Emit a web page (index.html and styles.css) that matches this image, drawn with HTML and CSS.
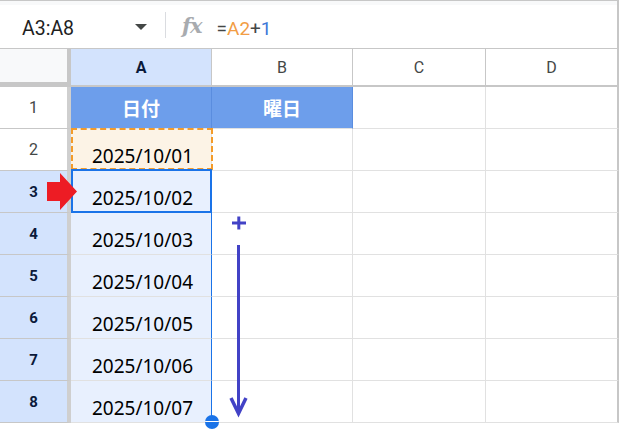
FILE: index.html
```html
<!DOCTYPE html>
<html lang="ja">
<head>
<meta charset="utf-8">
<link rel="stylesheet" href="styles.css">
</head>
<body>
<div class="app">
  <div class="fbar">
    <div class="namebox"><span class="nb-text">A3:A8</span><span class="nb-caret"></span></div>
    <div class="fdiv"></div>
    <span class="fx">fx</span>
    <span class="formula">=<span class="ref">A2</span>+<span class="num">1</span></span>
  </div>
  <div class="grid">
    <div class="corner"></div>
    <div class="ch ch-sel">A</div>
    <div class="ch">B</div>
    <div class="ch">C</div>
    <div class="ch last">D</div>

    <div class="rh">1</div>
    <div class="c hdr">日付</div>
    <div class="c hdr">曜日</div>
    <div class="c"></div>
    <div class="c last"></div>

    <div class="rh">2</div>
    <div class="c date copy">2025/10/01</div>
    <div class="c"></div>
    <div class="c"></div>
    <div class="c last"></div>

    <div class="rh rh-sel">3</div>
    <div class="c date sel active">2025/10/02</div>
    <div class="c"></div>
    <div class="c"></div>
    <div class="c last"></div>

    <div class="rh rh-sel">4</div>
    <div class="c date sel">2025/10/03</div>
    <div class="c"></div>
    <div class="c"></div>
    <div class="c last"></div>

    <div class="rh rh-sel">5</div>
    <div class="c date sel">2025/10/04</div>
    <div class="c"></div>
    <div class="c"></div>
    <div class="c last"></div>

    <div class="rh rh-sel">6</div>
    <div class="c date sel">2025/10/05</div>
    <div class="c"></div>
    <div class="c"></div>
    <div class="c last"></div>

    <div class="rh rh-sel">7</div>
    <div class="c date sel">2025/10/06</div>
    <div class="c"></div>
    <div class="c"></div>
    <div class="c last"></div>

    <div class="rh rh-sel">8</div>
    <div class="c date sel">2025/10/07</div>
    <div class="c"></div>
    <div class="c"></div>
    <div class="c last"></div>
  </div>

  <svg class="overlay" width="621" height="431" viewBox="0 0 621 431">
    <polygon fill="#ed1c24" points="47,182 60,182 60,173 77,191.5 60,210 60,201 47,201"/>
    <g stroke="#4242c6" stroke-width="3" fill="none">
      <line x1="232" y1="223" x2="246" y2="223"/>
      <line x1="238.8" y1="216.5" x2="238.8" y2="229.5"/>
      <line x1="238.5" y1="245" x2="238.5" y2="412"/>
      <polyline points="231,398 238.5,413.5 246,398" stroke-width="3.5" stroke-linejoin="miter"/>
    </g>
  </svg>
  <div class="handle"></div>
</div>
</body>
</html>
```
FILE: styles.css
```css
* { box-sizing: border-box; }
html, body { margin: 0; padding: 0; background: #fff; }
body { width: 621px; height: 431px; overflow: hidden; font-family: Roboto, "Liberation Sans", sans-serif; }

.app { position: relative; width: 621px; height: 431px; }

.fbar {
  width: 619px;
  height: 49px;
  border-top: 1px solid #c7c7c7;
  border-bottom: 1px solid #c7c7c7;
  border-right: 2px solid #c7c7c7;
  background: linear-gradient(#f8f9fa 0, #f8f9fa 4px, #fff 4px);
  display: flex;
  align-items: center;
  padding-top: 8px;
}
.namebox {
  width: 165px;
  display: flex;
  align-items: center;
  padding-left: 22px;
  padding-right: 18px;
}
.nb-text { font-size: 19.5px; line-height: 22px; color: #1f1f1f; }
.nb-caret {
  margin-left: auto;
  margin-top: -3px;
  width: 0; height: 0;
  border-left: 6px solid transparent;
  border-right: 6px solid transparent;
  border-top: 6px solid #444746;
}
.fdiv { width: 1px; height: 26px; background: #dadce0; margin-top: -8px; }
.fx {
  margin-left: 16px;
  margin-top: -6px;
  font-family: "DejaVu Serif", serif;
  font-style: italic;
  font-weight: bold;
  font-size: 21px;
  line-height: 22px;
  color: #a8abaf;
  letter-spacing: -1px;
}
.formula { margin-left: 15px; font-size: 19px; line-height: 22px; color: #444746; }
.formula .ref { color: #f29d45; }
.formula .num { color: #3c78d8; }

.grid {
  display: grid;
  grid-template-columns: 71px 141px 141px 133px 133px;
  grid-template-rows: 38px repeat(8, 42px);
  width: 619px;
}

.corner {
  background: #f8f9fa;
  border-right: 4px solid #c7c7c7;
  border-bottom: 5px solid #c7c7c7;
}
.ch {
  display: flex; align-items: center; justify-content: center;
  border-right: 1px solid #c7c7c7;
  border-bottom: 2px solid #c7c7c7;
  font-size: 16px;
  color: #444746;
  padding-top: 1px;
}
.ch-sel { background: #d3e3fd; color: #0b1a3a; font-weight: bold; }
.ch.last { border-right: 2px solid #c7c7c7; }

.rh {
  display: flex; align-items: center; justify-content: center;
  border-right: 4px solid #cfcfcf;
  border-bottom: 1px solid #c7c7c7;
  font-size: 16px;
  color: #444746;
  background: #fff;
}
.rh-sel { background: #d3e3fd; color: #0b1a3a; font-weight: bold; font-size: 15px; }

.c {
  position: relative;
  border-right: 1px solid #e1e1e1;
  border-bottom: 1px solid #e1e1e1;
}
.c.last { border-right: 2px solid #c7c7c7; }

.hdr {
  display: flex; align-items: center; justify-content: center;
  background: #6d9eeb;
  border-right-color: #5a8ddf;
  color: #fff;
  font-family: "Noto Sans CJK JP", "Noto Sans", sans-serif;
  font-weight: bold;
  font-size: 19px;
}

.date {
  display: flex; align-items: flex-end; justify-content: center;
  font-family: "Noto Sans", "Open Sans", sans-serif;
  font-size: 19px;
  line-height: 20px;
  padding-bottom: 4px;
  padding-left: 3px;
  color: #000;
}
.copy { background: #fcf3e6; }
.copy::after {
  content: "";
  position: absolute;
  top: -1px; left: 0; right: -2px; bottom: 0;
  border: 2px dashed #f39b2a;
}
.sel { background: #e8f0fe; border-right-color: #1a73e8; }
.active::after {
  content: "";
  position: absolute;
  top: -2px; left: 0; right: -1px; bottom: -1px;
  border: 2px solid #1a73e8;
}

.overlay { position: absolute; left: 0; top: 0; pointer-events: none; }
.handle {
  position: absolute;
  left: 205px; top: 415px;
  width: 14px; height: 14px;
  border-radius: 50%;
  background: #1a73e8;
  overflow: hidden;
}
.handle::after {
  content: "";
  position: absolute;
  left: 0; right: 0; top: 6px; height: 1px;
  background: #fff;
}
```
